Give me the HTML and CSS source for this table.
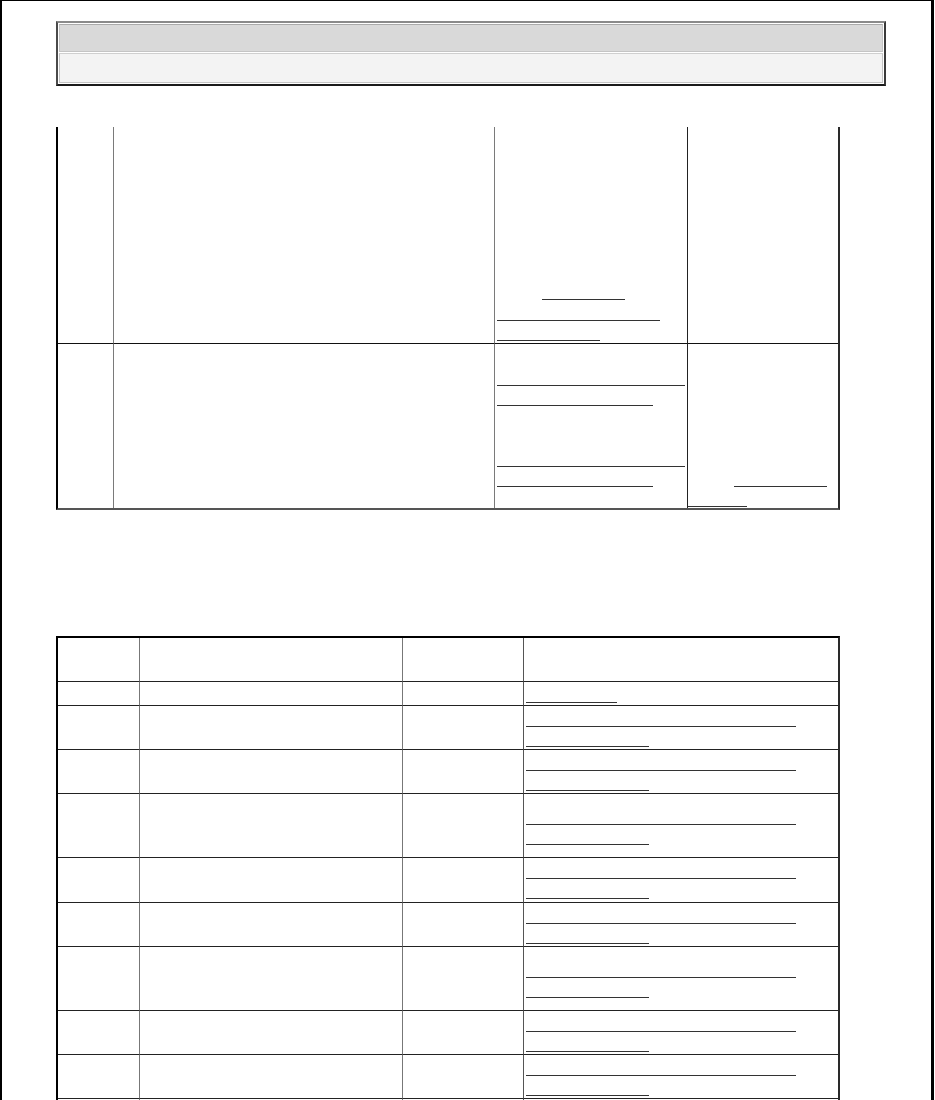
FILE: index.html
```html
<!DOCTYPE html>
<html lang="en">
<head>
<meta charset="utf-8">
<title>Document page</title>
<link rel="stylesheet" href="styles.css">
</head>
<body>
<div class="page">
  <div class="head">
    <div class="head-row head-row-1"></div>
    <div class="head-row head-row-2"></div>
  </div>

  <div class="t1">
    <div class="c r1a"></div>
    <div class="c r1a"></div>
    <div class="c r1a dark bottom-lines">
      <span class="l ul w83 ind45"></span>
      <span class="l ul w163"></span>
      <span class="l ul w103"></span>
    </div>
    <div class="c r1a last"></div>

    <div class="c r1b"></div>
    <div class="c r1b"></div>
    <div class="c r1b dark lines">
      <span class="l"></span>
      <span class="l ul w188"></span>
      <span class="l ul w156"></span>
      <span class="l"></span>
      <span class="l"></span>
      <span class="l ul w188"></span>
      <span class="l ul w156"></span>
    </div>
    <div class="c r1b last lines col4">
      <span class="l"></span>
      <span class="l"></span>
      <span class="l"></span>
      <span class="l"></span>
      <span class="l"></span>
      <span class="l"></span>
      <span class="l ul w93 ind46"></span>
      <span class="l ul w59"></span>
    </div>
  </div>

  <div class="t2">
    <div class="d h44"></div><div class="d h44"></div><div class="d h44 mid"></div><div class="d h44 last"></div>

    <div class="d h24"></div><div class="d h24"></div><div class="d h24 mid"></div>
    <div class="d h24 last links"><span class="k ul w91"></span></div>

    <div class="d h44"></div><div class="d h44"></div><div class="d h44 mid"></div>
    <div class="d h44 last links"><span class="k ul w270"></span><span class="k ul w123"></span></div>

    <div class="d h44"></div><div class="d h44"></div><div class="d h44 mid"></div>
    <div class="d h44 last links"><span class="k ul w270"></span><span class="k ul w123"></span></div>

    <div class="d h64"></div><div class="d h64"></div><div class="d h64 mid"></div>
    <div class="d h64 last links tall"><span class="k ul w270"></span><span class="k ul w123"></span></div>

    <div class="d h45"></div><div class="d h45"></div><div class="d h45 mid"></div>
    <div class="d h45 last links"><span class="k ul w270"></span><span class="k ul w123"></span></div>

    <div class="d h44"></div><div class="d h44"></div><div class="d h44 mid"></div>
    <div class="d h44 last links"><span class="k ul w270"></span><span class="k ul w123"></span></div>

    <div class="d h64"></div><div class="d h64"></div><div class="d h64 mid"></div>
    <div class="d h64 last links tall"><span class="k ul w270"></span><span class="k ul w123"></span></div>

    <div class="d h44"></div><div class="d h44"></div><div class="d h44 mid"></div>
    <div class="d h44 last links"><span class="k ul w270"></span><span class="k ul w123"></span></div>

    <div class="d h44"></div><div class="d h44"></div><div class="d h44 mid"></div>
    <div class="d h44 last links"><span class="k ul w270"></span><span class="k ul w123"></span></div>

    <div class="d h44"></div><div class="d h44"></div><div class="d h44 mid"></div>
    <div class="d h44 last links"><span class="k ul w270"></span><span class="k ul w123"></span></div>
  </div>
</div>
</body>
</html>
```

FILE: styles.css
```css
html, body {
  margin: 0;
  padding: 0;
  background: #fff;
  font-family: "Liberation Serif", "Times New Roman", serif;
}

.page {
  box-sizing: border-box;
  width: 934px;
  min-height: 1100px;
  border-top: 1px solid #000;
  border-left: 2px solid #000;
  border-right: 3px solid #000;
  padding: 20px 0 0 54px;
  overflow: hidden;
}

/* header box */
.head {
  box-sizing: border-box;
  width: 830px;
  border-style: solid;
  border-width: 2px;
  border-color: #8a8a8a #3a3a3a #1a1a1a #4a4a4a;
  padding: 1px;
  display: flex;
  flex-direction: column;
  gap: 1px;
  margin-bottom: 41px;
}
.head-row {
  box-sizing: border-box;
  border: 1px solid #c4c4c4;
}
.head-row-1 {
  height: 28px;
  background: #d9d9d9;
  border-top-color: #aaaaaa;
}
.head-row-2 {
  height: 30px;
  background: #f3f3f3;
  border-top-color: #cfcfcf;
}

/* first table (continued from previous page) */
.t1 {
  box-sizing: border-box;
  width: 784px;
  display: grid;
  grid-template-columns: 56px 381px 193px 150px;
  border-left: 2px solid #000;
  border-right: 2px solid #2a2a2a;
  border-bottom: 2px solid #555;
  margin-bottom: 126px;
}
.c {
  box-sizing: border-box;
  border-right: 1px solid #7a7a7a;
}
.c.dark { border-right-color: #222; }
.c.last { border-right: none; }
.r1a {
  height: 217px;
  border-bottom: 1px solid #111;
}
.r1b { height: 164px; }

.bottom-lines {
  display: flex;
  flex-direction: column;
  justify-content: flex-end;
  padding: 0 0 2px 2px;
}
.lines {
  display: flex;
  flex-direction: column;
  padding: 1px 0 0 2px;
}
.lines.col4 { padding-left: 0; }

.l {
  display: block;
  box-sizing: border-box;
  height: 20.3px;
  flex: none;
}

/* second table */
.t2 {
  box-sizing: border-box;
  width: 784px;
  display: grid;
  grid-template-columns: 82px 263px 121px 314px;
  border-left: 2px solid #000;
  border-top: 2px solid #000;
  border-right: 2px solid #2a2a2a;
}
.d {
  box-sizing: border-box;
  border-right: 1px solid #777;
  border-bottom: 1px solid #222;
}
.d.mid { border-right-color: #555; }
.d.last { border-right: none; }
.h24 { height: 24px; }
.h44 { height: 44px; }
.h45 { height: 45px; }
.h64 { height: 64px; }

.links {
  display: flex;
  flex-direction: column;
  padding: 1px 0 0 2px;
}
.links.tall { padding-top: 11px; }
.k {
  display: block;
  box-sizing: border-box;
  height: 20px;
  flex: none;
}

/* link underlines */
.ul { border-bottom: 1px solid #333; }
.w59 { width: 59px; }
.w83 { width: 83px; }
.w91 { width: 91px; }
.w93 { width: 93px; }
.w103 { width: 103px; }
.w123 { width: 123px; }
.w156 { width: 156px; }
.w163 { width: 163px; }
.w188 { width: 188px; }
.w270 { width: 270px; }
.ind45 { margin-left: 45px; }
.ind46 { margin-left: 46px; }
```
